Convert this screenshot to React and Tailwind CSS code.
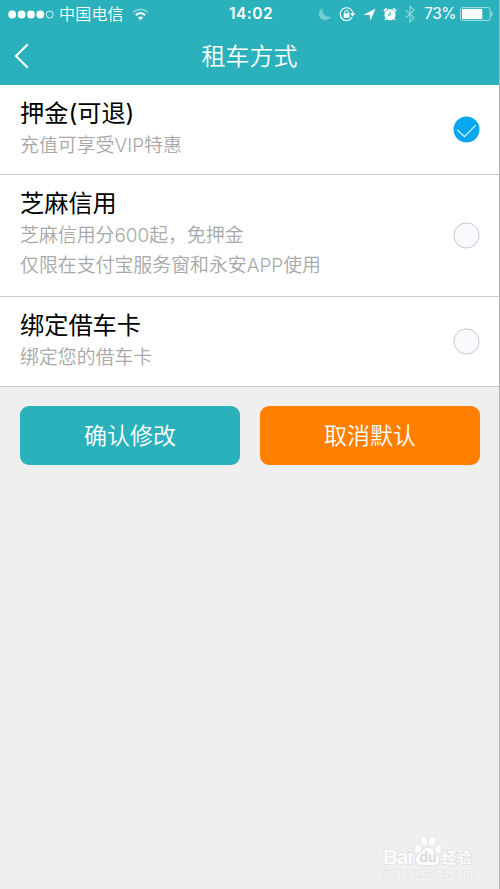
import { useState } from "react";

const rentalModes = [
  {
    id: "deposit",
    title: "押金(可退)",
    lines: ["充值可享受VIP特惠"],
    className: "h-[90px] border-b border-[#c9c9c9] pt-[13px]"
  },
  {
    id: "zhima",
    title: "芝麻信用",
    lines: ["芝麻信用分600起，免押金", "仅限在支付宝服务窗和永安APP使用"],
    className: "h-[122px] border-b border-[#cfcfcf] pt-[13px]"
  },
  {
    id: "card",
    title: "绑定借车卡",
    lines: ["绑定您的借车卡"],
    className: "h-[90px] border-b border-[#c9c9c9] pt-[13px]"
  }
];

function StatusBar() {
  return (
    <div className="grid h-7 grid-cols-[1fr_auto_1fr] items-center pr-[7px] pl-[8px] text-white">
      <div className="flex items-center">
        <svg className="h-[9px] w-[46px]" viewBox="0 0 46 9" fill="currentColor">
          <circle cx="4.2" cy="4.5" r="3.9" />
          <circle cx="13.6" cy="4.5" r="3.9" />
          <circle cx="23" cy="4.5" r="3.9" />
          <circle cx="32.3" cy="4.5" r="3.9" />
          <circle cx="41.7" cy="4.5" r="3.5" fill="none" stroke="currentColor" strokeWidth="0.8" />
        </svg>
        <span className="ml-[5px] text-[16px] leading-none font-[350] tracking-[0.2px]">中国电信</span>
        <svg className="ml-[8px] h-[13px] w-[17px]" viewBox="0 0 17 13" fill="none" stroke="currentColor">
          <path d="M1.2 4.4C5.2 0.4 11.8 0.4 15.8 4.4" strokeWidth="1.7" opacity="0.4" />
          <path d="M3.9 7.2C6.6 4.7 10.4 4.7 13.1 7.2" strokeWidth="2" />
          <path d="M5.9 9.6C7.5 8.2 9.5 8.2 11.1 9.6L8.5 12.3Z" fill="currentColor" stroke="none" />
        </svg>
      </div>
      <span className="ml-[2px] font-[Inter,'Noto_Sans_CJK_SC',sans-serif] text-[15.5px] leading-none font-semibold tracking-[0.5px]">14:02</span>
      <div className="flex items-center justify-end">
        <svg className="h-[14px] w-[14px]" viewBox="0 0 14 14" fill="currentColor" opacity="0.35">
          <path d="M4.5 1.2A6.3 6.3 0 1 0 13 9.4A6.8 6.8 0 0 1 4.5 1.2Z" />
        </svg>
        <svg className="ml-[7px] h-[15px] w-[17px]" viewBox="0 0 17 15" fill="none" stroke="currentColor">
          <path d="M13.2 10.2A6.4 6.4 0 1 1 13.8 5.8" strokeWidth="1.1" />
          <path d="M10.9 6.2H16.5L13.7 9.4Z" fill="currentColor" stroke="none" />
          <rect x="4.7" y="6.4" width="5.8" height="4.4" fill="currentColor" stroke="none" />
          <path d="M5.8 6.6V5.2A1.8 1.8 0 0 1 9.4 5.2V6.6" strokeWidth="1" />
        </svg>
        <svg className="ml-[7px] h-[13px] w-[13px]" viewBox="0 0 13 13" fill="currentColor">
          <path d="M12.6 0.5L7.5 12.4L6.5 7H0.4Z" />
        </svg>
        <svg className="ml-[7px] h-[14px] w-[14px]" viewBox="0 0 14 14" fill="none" stroke="currentColor">
          <circle cx="7" cy="7.7" r="5.6" fill="currentColor" stroke="none" />
          <path d="M0.9 4.2A10 10 0 0 1 3.8 1.4M13.1 4.2A10 10 0 0 0 10.2 1.4" strokeWidth="1.6" />
          <path d="M2.9 11.9L1.8 13.2M11.1 11.9L12.2 13.2" strokeWidth="1.3" />
          <path d="M7.2 4.6V8H4.7" stroke="#2bb1bc" strokeWidth="1" />
        </svg>
        <svg className="ml-[8px] h-[18px] w-[10px]" viewBox="0 0 10 18" fill="none" stroke="currentColor" strokeWidth="1.2" opacity="0.45">
          <path d="M0.6 5L9 12.8L5 17V1L9 5.2L0.6 13" />
        </svg>
        <span className="ml-[9px] font-[Inter,'Noto_Sans_CJK_SC',sans-serif] text-[15.5px] leading-none font-normal tracking-[-0.5px]">73%</span>
        <svg className="ml-[4px] h-[14px] w-[33px] -mr-px" viewBox="0 0 33 14" fill="currentColor">
          <rect x="0.6" y="0.6" width="29.6" height="12.8" rx="2.2" fill="none" stroke="currentColor" strokeWidth="1" opacity="0.6" />
          <rect x="2" y="2" width="20.3" height="10" rx="0.8" />
          <path d="M31.2 4.8C33 5.5 33 8.5 31.2 9.2Z" opacity="0.7" />
        </svg>
      </div>
    </div>
  );
}

function Radio({ checked }) {
  return (
    <svg className="mr-[19px] h-[27px] w-[27px]" viewBox="0 0 27 27" fill="none">
      <circle
        cx="13.5"
        cy="13.5"
        r={checked ? 13 : 12.6}
        fill={checked ? "#06a7ee" : "#f8f8fd"}
        stroke={checked ? "none" : "#c8c8c8"}
        strokeWidth="1"
      />
      <path
        d="M4.2 13.8L11.4 20.6L22.8 9.2"
        stroke="#ffffff"
        strokeWidth="1.2"
        opacity={checked ? 0.9 : 1}
      />
    </svg>
  );
}

function Watermark() {
  return (
    <svg className="h-[46px] w-[92px]" viewBox="0 0 92 46" fill="#fcfcfc" stroke="#dcdcdc" strokeWidth="1.2" paintOrder="stroke">
      <text x="0" y="30" fontFamily="Liberation Sans, sans-serif" fontSize="21" fontWeight="700" textLength="30">Bai</text>
      <ellipse cx="35" cy="14.5" rx="3.2" ry="4.2" />
      <ellipse cx="41" cy="7" rx="3.4" ry="4.5" />
      <ellipse cx="49.2" cy="7.6" rx="3.4" ry="4.5" transform="rotate(8 49.2 7.6)" />
      <ellipse cx="55.3" cy="15" rx="3.2" ry="4.3" transform="rotate(12 55.3 15)" />
      <path d="M45 13.6C41 13.6 39.5 17.6 35.7 20.6C31 24 32 31 38.5 31H51C57 31 58 24.5 53.8 20.8C50.3 17.6 49 13.6 45 13.6Z" />
      <text x="36.5" y="28.3" fontFamily="Liberation Sans, sans-serif" fontSize="14" fontWeight="700" fill="#d9d9d9" stroke="none">du</text>
      <text x="58.5" y="28.5" fontFamily="Noto Sans CJK SC, sans-serif" fontSize="15" fontWeight="700">经验</text>
      <text x="0.5" y="43" fontFamily="Liberation Sans, sans-serif" fontSize="11" textLength="89" fill="#fafafa" stroke="#e3e3e3">jingyan.baidu.com</text>
    </svg>
  );
}

export default function App() {
  const [selected, setSelected] = useState("deposit");

  return (
    <div className="flex h-[889px] w-[500px] flex-col overflow-hidden border-r border-black/25 bg-[#efefef] font-['Inter','Noto_Sans_CJK_SC',sans-serif]">
      <header className="h-[85px] shrink-0 bg-[#2bb1bc] text-white">
        <StatusBar />
        <div className="grid h-[57px] grid-cols-[1fr_auto_1fr] items-center">
          <button type="button" aria-label="返回" className="ml-[14px] -mt-px w-4">
            <svg className="h-[26px] w-[16px]" viewBox="0 0 16 26" fill="none" stroke="currentColor" strokeWidth="2">
              <path d="M13.8 1.3L2 13L13.8 24.7" />
            </svg>
          </button>
          <h1 className="text-[24px] leading-8 font-[350]">租车方式</h1>
          <span />
        </div>
      </header>

      <div className="bg-white">
        {rentalModes.map((mode) => (
          <button
            key={mode.id}
            type="button"
            onClick={() => setSelected(mode.id)}
            className={`flex w-full justify-between pl-5 text-left ${mode.className}`}
          >
            <span className="flex flex-col">
              <span className="text-[24.2px] leading-8 text-black">{mode.title}</span>
              <span className="mt-px flex flex-col">
                {mode.lines.map((line) => (
                  <span key={line} className="text-[18.9px] leading-[29.5px] font-[350] text-[#a8a8a8]">
                    {line}
                  </span>
                ))}
              </span>
            </span>
            <span className="-mt-[13px] self-center">
              <Radio checked={selected === mode.id} />
            </span>
          </button>
        ))}
      </div>

      <div className="flex gap-5 pt-[19px] pr-[19px] pl-5">
        <button type="button" className="h-[59px] flex-1 rounded-[9px] bg-[#2bb1bc] pt-[2px] text-[23px] font-[350] text-white">
          确认修改
        </button>
        <button type="button" className="h-[59px] flex-1 rounded-[9px] bg-[#ff8000] pt-[2px] text-[23px] font-[350] text-white">
          取消默认
        </button>
      </div>

      <div className="mt-auto flex justify-end pr-[24px] pb-[9px]">
        <Watermark />
      </div>
    </div>
  );
}
